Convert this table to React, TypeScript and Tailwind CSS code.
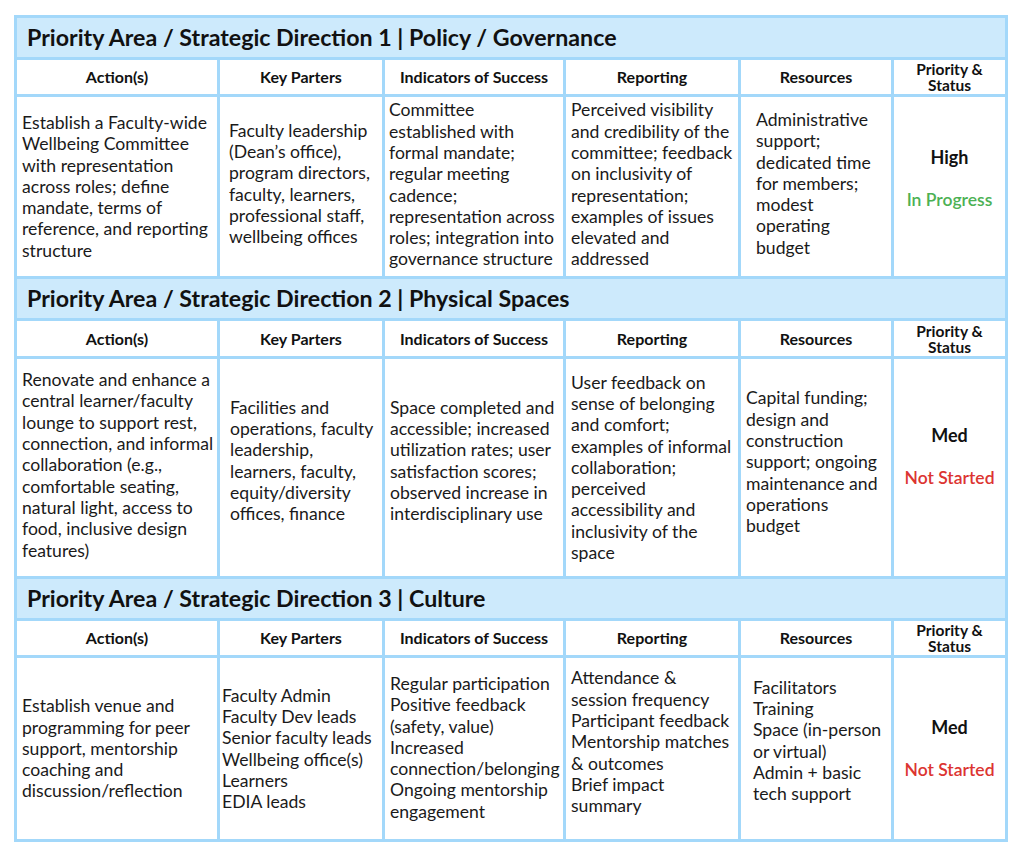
const font = { fontFamily: "Lato, 'Noto Sans', sans-serif" };

type Cell = { lines: string[]; cls: string };
type Section = {
  title: string;
  height: string;
  headH: string;
  cells: Cell[];
  priority: string;
  status: string;
  statusCls: string;
  prioCls: string;
};

const headers = ["Action(s)", "Key Parters", "Indicators of Success", "Reporting", "Resources"];

const sections: Section[] = [
  {
    title: "Priority Area / Strategic Direction 1 | Policy / Governance",
    height: "h-[179px]",
    headH: "h-[34px]",
    cells: [
      {
        lines: [
          "Establish a Faculty-wide",
          "Wellbeing Committee",
          "with representation",
          "across roles; define",
          "mandate, terms of",
          "reference, and reporting",
          "structure",
        ],
        cls: "pl-[5px]",
      },
      {
        lines: [
          "Faculty leadership",
          "(Dean’s office),",
          "program directors,",
          "faculty, learners,",
          "professional staff,",
          "wellbeing offices",
        ],
        cls: "pl-[9px] pb-[6px]",
      },
      {
        lines: [
          "Committee",
          "established with",
          "formal mandate;",
          "regular meeting",
          "cadence;",
          "representation across",
          "roles; integration into",
          "governance structure",
        ],
        cls: "pl-[4px] pb-[4px]",
      },
      {
        lines: [
          "Perceived visibility",
          "and credibility of the",
          "committee; feedback",
          "on inclusivity of",
          "representation;",
          "examples of issues",
          "elevated and",
          "addressed",
        ],
        cls: "pl-[5px] pb-[4px]",
      },
      {
        lines: ["Administrative", "support;", "dedicated time", "for members;", "modest", "operating", "budget"],
        cls: "pl-[15px] pb-[6px]",
      },
    ],
    priority: "High",
    status: "In Progress",
    statusCls: "text-[#4cb154]",
    prioCls: "pb-[17px]",
  },
  {
    title: "Priority Area / Strategic Direction 2 | Physical Spaces",
    height: "h-[217px]",
    headH: "h-[35px]",
    cells: [
      {
        lines: [
          "Renovate and enhance a",
          "central learner/faculty",
          "lounge to support rest,",
          "connection, and informal",
          "collaboration (e.g.,",
          "comfortable seating,",
          "natural light, access to",
          "food, inclusive design",
          "features)",
        ],
        cls: "pl-[5px] pb-[5px]",
      },
      {
        lines: [
          "Facilities and",
          "operations, faculty",
          "leadership,",
          "learners, faculty,",
          "equity/diversity",
          "offices, finance",
        ],
        cls: "pl-[10px] pb-[14px]",
      },
      {
        lines: [
          "Space completed and",
          "accessible; increased",
          "utilization rates; user",
          "satisfaction scores;",
          "observed increase in",
          "interdisciplinary use",
        ],
        cls: "pl-[5px] pb-[14px]",
      },
      {
        lines: [
          "User feedback on",
          "sense of belonging",
          "and comfort;",
          "examples of informal",
          "collaboration;",
          "perceived",
          "accessibility and",
          "inclusivity of the",
          "space",
        ],
        cls: "pl-[5px]",
      },
      {
        lines: [
          "Capital funding;",
          "design and",
          "construction",
          "support; ongoing",
          "maintenance and",
          "operations",
          "budget",
        ],
        cls: "pl-[5px] pb-[11px]",
      },
    ],
    priority: "Med",
    status: "Not Started",
    statusCls: "text-[#dc3431]",
    prioCls: "pb-[23px]",
  },
  {
    title: "Priority Area / Strategic Direction 3 | Culture",
    height: "h-[181px]",
    headH: "h-[34px]",
    cells: [
      {
        lines: [
          "Establish venue and",
          "programming for peer",
          "support, mentorship",
          "coaching and",
          "discussion/reflection",
        ],
        cls: "pl-[5px]",
      },
      {
        lines: [
          "Faculty Admin",
          "Faculty Dev leads",
          "Senior faculty leads",
          "Wellbeing office(s)",
          "Learners",
          "EDIA leads",
        ],
        cls: "pl-[2px]",
      },
      {
        lines: [
          "Regular participation",
          "Positive feedback",
          "(safety, value)",
          "Increased",
          "connection/belonging",
          "Ongoing mentorship",
          "engagement",
        ],
        cls: "pl-[5px] pb-[2px]",
      },
      {
        lines: [
          "Attendance &",
          "session frequency",
          "Participant feedback",
          "Mentorship matches",
          "& outcomes",
          "Brief impact",
          "summary",
        ],
        cls: "pl-[5px] pb-[13px]",
      },
      {
        lines: ["Facilitators", "Training", "Space (in-person", "or virtual)", "Admin + basic", "tech support"],
        cls: "pl-[12px] pb-[16px]",
      },
    ],
    priority: "Med",
    status: "Not Started",
    statusCls: "text-[#dc3431]",
    prioCls: "",
  },
];

function SectionBlock({ s }: { s: Section }) {
  return (
    <>
      <div className="col-span-6 flex h-[39px] items-center bg-[#cdeafc] pl-[10px] text-[23.2px] font-bold text-[#111]">
        {s.title}
      </div>
      {headers.map((h) => (
        <div key={h} className={`flex ${s.headH} items-center justify-center bg-white text-[16px] font-bold text-[#111]`}>
          {h}
        </div>
      ))}
      <div className={`flex ${s.headH} flex-col items-center justify-center bg-white text-[15.5px] font-bold leading-[16px] text-[#111]`}>
        <span>Priority &amp;</span>
        <span>Status</span>
      </div>
      {s.cells.map((c, i) => (
        <div key={i} className={`flex ${s.height} items-center bg-white ${c.cls}`}>
          <div className="whitespace-nowrap text-[17.6px] leading-[21.3px] text-[#1a1a1a]">
            {c.lines.map((l, j) => (
              <div key={j}>{l}</div>
            ))}
          </div>
        </div>
      ))}
      <div className={`flex ${s.height} flex-col items-center justify-center bg-white ${s.prioCls}`}>
        <div className="text-[18px] font-bold leading-[21px] text-[#111]">{s.priority}</div>
        <div className={`mt-[21px] text-[17.5px] font-semibold leading-[21px] ${s.statusCls}`}>{s.status}</div>
      </div>
    </>
  );
}

export default function App() {
  return (
    <div className="min-h-[855px] w-[1024px] bg-white pt-[15px] pl-[14px]" style={font}>
      <div className="grid w-[994px] grid-cols-[200px_162px_178px_172px_150px_111px] gap-[3px] border-[3px] border-[#a3d8fa] bg-[#a3d8fa]">
        {sections.map((s) => (
          <SectionBlock key={s.title} s={s} />
        ))}
      </div>
    </div>
  );
}
